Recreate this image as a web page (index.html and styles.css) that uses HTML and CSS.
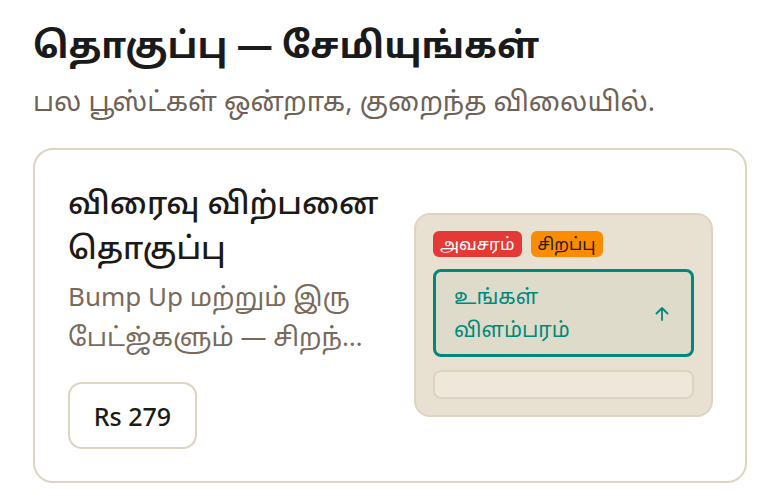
FILE: index.html
```html
<!DOCTYPE html>
<html lang="ta">
<head>
<meta charset="utf-8">
<link rel="stylesheet" href="styles.css">
</head>
<body>
<main class="page">
  <h1 class="title">தொகுப்பு — சேமியுங்கள்</h1>
  <p class="subtitle">பல பூஸ்ட்கள் ஒன்றாக, குறைந்த விலையில்.</p>
  <section class="card">
    <div class="info">
      <h2 class="card-title">விரைவு விற்பனை தொகுப்பு</h2>
      <p class="desc">Bump Up மற்றும் இரு பேட்ஜ்களும் — சிறந்த மதிப்பு</p>
      <button class="price">Rs 279</button>
    </div>
    <div class="preview">
      <div class="badges">
        <span class="badge urgent">அவசரம்</span>
        <span class="badge special">சிறப்பு</span>
      </div>
      <div class="ad">
        <span class="ad-text">உங்கள்<br>விளம்பரம்</span>
        <svg class="arrow" width="18" height="18" viewBox="0 0 18 18" fill="none" stroke="currentColor" stroke-width="1.8" stroke-linecap="round" stroke-linejoin="round"><path d="M9 15V3M3.5 8.5L9 3l5.5 5.5"/></svg>
      </div>
      <div class="bar"></div>
    </div>
  </section>
</main>
</body>
</html>
```
FILE: styles.css
```css
* { box-sizing: border-box; }
html, body { margin: 0; padding: 0; background: #ffffff; }
body { font-family: "Noto Sans", "Noto Sans Tamil", sans-serif; color: #1c1a17; }
.page { padding: 23px 33px 0 33px; }
.title { margin: 0; font-size: 36px; font-weight: 700; line-height: 44px; color: #1a1a1a; }
.subtitle { margin: 17px 0 0 0; font-size: 27px; line-height: 34px; color: #6e6256; }
.card {
  margin-top: 30px;
  width: 714px;
  height: 335px;
  border: 2px solid #ddd4c2;
  border-radius: 20px;
  padding: 30px 32px 32px 33px;
  display: flex;
  justify-content: space-between;
  align-items: center;
}
.info { width: 330px; display: flex; flex-direction: column; align-self: flex-start; }
.card-title { margin: 0; font-size: 31px; font-weight: 500; line-height: 45px; color: #1c1a17; }
.desc {
  margin: 6px 0 0 0; font-size: 26px; line-height: 40px; color: #7a6a5a;
  display: -webkit-box; -webkit-line-clamp: 2; -webkit-box-orient: vertical; overflow: hidden;
  width: 305px;
}
.price {
  margin-top: 26px; align-self: flex-start;
  width: 129px; height: 67px;
  border: 2px solid #ddd4c2; border-radius: 14px; background: #fff;
  font-family: "Noto Sans", sans-serif; font-size: 25px; font-weight: 500; color: #1c1a17;
}
.preview {
  width: 299px; height: 204px;
  background: #e8e1d1; border: 2px solid #ddd5c2; border-radius: 16px;
  padding: 16px 17px;
  display: flex; flex-direction: column;
}
.badges { display: flex; gap: 9px; }
.badge { font-size: 17px; line-height: 26px; padding: 0 7px; border-radius: 6px; }
.urgent { background: #e53935; color: #ffffff; }
.special { background: #fb8c00; color: #2a1a00; }
.ad {
  margin-top: 12px; height: 90px;
  border: 3px solid #00897b; border-radius: 8px; background: #dedbcb;
  display: flex; align-items: center; justify-content: space-between;
  padding: 0 20px 0 18px; color: #00897b;
}
.ad-text { font-size: 21px; line-height: 33px; }
.arrow { margin-top: 2px; }
.bar { margin-top: 13px; height: 29px; background: #efe7d9; border: 2px solid #ddd3c0; border-radius: 8px; }
```
